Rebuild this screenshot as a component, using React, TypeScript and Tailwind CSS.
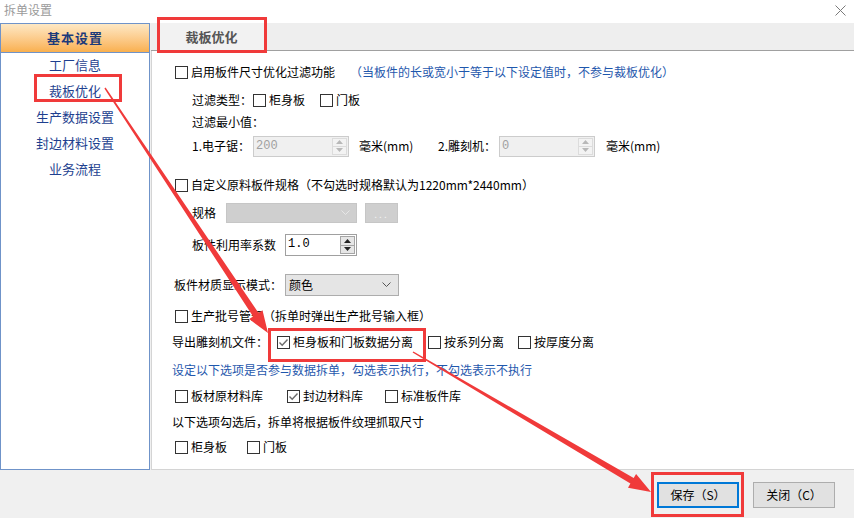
import React from "react";

const RED = "#f03a3a";

function Box({ checked = false }: { checked?: boolean }) {
  return (
    <span className="inline-flex w-[13px] h-[13px] shrink-0 items-center justify-center border border-[#333333] bg-white">
      {checked && (
        <svg width="11" height="11" viewBox="0 0 11 11">
          <path d="M1.5 5.5 L4.2 8.2 L9.5 2.5" fill="none" stroke="#6b6b6b" strokeWidth="1.4" />
        </svg>
      )}
    </span>
  );
}

function Check({ label, checked = false, w }: { label: string; checked?: boolean; w?: string }) {
  return (
    <div className={`flex items-center shrink-0 ${w ?? ""}`}>
      <Box checked={checked} />
      <span className="ml-[3px] whitespace-nowrap">{label}</span>
    </div>
  );
}

function Tri({ up, color }: { up: boolean; color: string }) {
  return (
    <svg width="7" height="4" viewBox="0 0 7 4">
      <path d={up ? "M0 4 L3.5 0 L7 4 Z" : "M0 0 L3.5 4 L7 0 Z"} fill={color} />
    </svg>
  );
}

function SpinInput({ value, disabled, w, h }: { value: string; disabled?: boolean; w: string; h: string }) {
  return (
    <div
      className={`flex ${w} ${h} border ${
        disabled ? "border-[#cccccc] bg-[#f0f0f0] text-[#a0a0a0]" : "border-[#a0a0a0] bg-white text-black"
      }`}
    >
      <span className="flex-1 pl-[2px] leading-[19px] font-['Liberation_Mono',monospace] text-[12px]">{value}</span>
      <div className="flex flex-col w-[15px] my-[1px] mr-[1px]">
        <div
          className={`flex-1 flex items-center justify-center border ${
            disabled ? "border-[#dcdcdc] bg-[#f3f3f3]" : "border-[#a5a5a5] bg-[#e6e6e6]"
          }`}
        >
          <Tri up color={disabled ? "#b8b8b8" : "#222222"} />
        </div>
        <div
          className={`flex-1 flex items-center justify-center border border-t-0 ${
            disabled ? "border-[#dcdcdc] bg-[#f3f3f3]" : "border-[#a5a5a5] bg-[#e6e6e6]"
          }`}
        >
          <Tri up={false} color={disabled ? "#b8b8b8" : "#222222"} />
        </div>
      </div>
    </div>
  );
}

function Chevron({ color }: { color: string }) {
  return (
    <svg width="9" height="6" viewBox="0 0 9 6">
      <path d="M0.5 0.5 L4.5 4.5 L8.5 0.5" fill="none" stroke={color} strokeWidth="1" />
    </svg>
  );
}

function arrow(x1: number, y1: number, x2: number, y2: number, w0: number, w1: number, hl: number, hw: number) {
  const dx = x2 - x1;
  const dy = y2 - y1;
  const L = Math.hypot(dx, dy);
  const ux = dx / L;
  const uy = dy / L;
  const px = -uy;
  const py = ux;
  const bx = x2 - ux * hl;
  const by = y2 - uy * hl;
  const pts = [
    [x1 + (px * w0) / 2, y1 + (py * w0) / 2],
    [bx + (px * w1) / 2, by + (py * w1) / 2],
    [bx + (px * hw) / 2, by + (py * hw) / 2],
    [x2, y2],
    [bx - (px * hw) / 2, by - (py * hw) / 2],
    [bx - (px * w1) / 2, by - (py * w1) / 2],
    [x1 - (px * w0) / 2, y1 - (py * w0) / 2],
  ];
  return pts.map((p) => p.map((n) => n.toFixed(1)).join(",")).join(" ");
}

const sideItems = ["工厂信息", "裁板优化", "生产数据设置", "封边材料设置", "业务流程"];

export default function App() {
  return (
    <div className="relative w-[854px] h-[518px] overflow-hidden bg-[#f0f0f0] text-[12px] text-black font-['Noto_Sans_CJK_SC',sans-serif]">
      {/* title bar */}
      <div className="h-[23px] bg-white flex items-center justify-between pl-[4px] pr-[8px]">
        <span className="text-[#9a9a9a] leading-none -mt-[3px]">拆单设置</span>
        <svg width="11" height="11" viewBox="0 0 11 11" className="-mt-[3px]">
          <path d="M0.5 0.5 L10.5 10.5 M10.5 0.5 L0.5 10.5" stroke="#7a7a7a" strokeWidth="1" />
        </svg>
      </div>

      {/* body */}
      <div className="flex h-[447px]">
        {/* sidebar */}
        <div className="w-[150px] h-full border border-[#6f93c9] bg-white flex flex-col">
          <div className="h-[29px] flex items-center justify-center border-b border-[#6f93c9] bg-gradient-to-b from-[#fde8c4] to-[#f9b04e]">
            <span className="font-bold text-[13px] text-[#1c3a7a] tracking-[1px]">基本设置</span>
          </div>
          <div className="flex flex-col items-center -mt-[1px]">
            {sideItems.map((s) => (
              <div key={s} className="h-[26px] leading-[26px] text-[13px] text-[#1e3f8f]">
                {s}
              </div>
            ))}
          </div>
        </div>

        {/* main panel */}
        <div className="ml-[1px] flex-1 flex flex-col">
          <div className="h-[28px] flex border-b border-[#a0a0a0] bg-[#eeeeee]">
            <div className="ml-[7px] w-[107px] h-[28px] border-x border-[#a0a0a0] bg-[#f2f2f2] flex items-center justify-center">
              <span className="font-bold text-[13px] text-[#555555]">裁板优化</span>
            </div>
          </div>
          <div className="flex-1 bg-white border-l border-b border-[#d4d4d4] pl-[23px] pt-[11px] flex flex-col">
            {/* row 1 */}
            <div className="h-[20px] flex items-center">
              <Check label="启用板件尺寸优化过滤功能" w="w-[175px]" />
              <span className="text-[#1f58ad] whitespace-nowrap">（当板件的长或宽小于等于以下设定值时，不参与裁板优化）</span>
            </div>
            {/* row 2 */}
            <div className="h-[20px] mt-[8px] flex items-center pl-[17px]">
              <span className="w-[61px]">过滤类型：</span>
              <Check label="柜身板" w="w-[67px]" />
              <Check label="门板" />
            </div>
            {/* row 3 */}
            <div className="h-[20px] mt-[2px] flex items-center pl-[17px]">过滤最小值：</div>
            {/* row 4 */}
            <div className="h-[22px] mt-[3px] flex items-center pl-[17px]">
              <span className="w-[61px]">1.电子锯：</span>
              <SpinInput value="200" disabled w="w-[96px]" h="h-[21px]" />
              <span className="ml-[10px] w-[79px]">毫米(mm)</span>
              <span className="w-[61px]">2.雕刻机：</span>
              <SpinInput value="0" disabled w="w-[96px]" h="h-[21px]" />
              <span className="ml-[11px]">毫米(mm)</span>
            </div>
            {/* row 5 */}
            <div className="h-[20px] mt-[18px] flex items-center">
              <Check label="自定义原料板件规格（不勾选时规格默认为1220mm*2440mm）" />
            </div>
            {/* row 6 */}
            <div className="h-[20px] mt-[8px] flex items-center pl-[17px]">
              <span className="w-[34px]">规格</span>
              <div className="w-[131px] h-[20px] bg-[#cfcfcf] border border-[#c6c6c6] flex items-center justify-end pr-[6px]">
                <Chevron color="#e6e6e6" />
              </div>
              <div className="ml-[8px] w-[33px] h-[20px] bg-[#cfcfcf] border border-[#c6c6c6] flex items-center justify-center text-[#f2f2f2] text-[10px] tracking-[2px]">
                ...
              </div>
            </div>
            {/* row 7 */}
            <div className="h-[22px] mt-[11px] flex items-center pl-[17px]">
              <span className="w-[93px]">板件利用率系数</span>
              <SpinInput value="1.0" w="w-[72px]" h="h-[22px]" />
            </div>
            {/* row 8 */}
            <div className="h-[22px] mt-[18px] flex items-center -ml-[1px]">
              <span className="w-[111px]">板件材质显示模式：</span>
              <div className="w-[114px] h-[22px] bg-[#e5e5e5] border border-[#adadad] flex items-center justify-between pl-[3px] pr-[7px]">
                <span>颜色</span>
                <Chevron color="#555555" />
              </div>
            </div>
            {/* row 9 */}
            <div className="h-[20px] mt-[10px] flex items-center">
              <Check label="生产批号管理（拆单时弹出生产批号输入框）" />
            </div>
            {/* row 10 */}
            <div className="h-[20px] mt-[6px] flex items-center -ml-[3px]">
              <span className="w-[105px]">导出雕刻机文件：</span>
              <Check label="柜身板和门板数据分离" checked w="w-[151px]" />
              <Check label="按系列分离" w="w-[90px]" />
              <Check label="按厚度分离" />
            </div>
            {/* row 11 */}
            <div className="h-[20px] mt-[8px] flex items-center -ml-[3px] text-[#1f58ad]">
              设定以下选项是否参与数据拆单，勾选表示执行，不勾选表示不执行
            </div>
            {/* row 12 */}
            <div className="h-[20px] mt-[6px] flex items-center">
              <Check label="板材原材料库" w="w-[112px]" />
              <Check label="封边材料库" checked w="w-[98px]" />
              <Check label="标准板件库" />
            </div>
            {/* row 13 */}
            <div className="h-[20px] mt-[6px] flex items-center -ml-[3px]">以下选项勾选后，拆单将根据板件纹理抓取尺寸</div>
            {/* row 14 */}
            <div className="h-[20px] mt-[5px] flex items-center">
              <Check label="柜身板" w="w-[72px]" />
              <Check label="门板" />
            </div>
          </div>
        </div>
      </div>

      {/* footer */}
      <div className="h-[48px] flex justify-end items-start pt-[12px] pr-[19px] gap-[14px]">
        <button className="w-[82px] h-[26px] bg-[#e1e1e1] border-2 border-[#0078d7] text-[12px]">保存（S）</button>
        <button className="w-[82px] h-[26px] bg-[#e1e1e1] border border-[#adadad] text-[12px]">关闭（C）</button>
      </div>

      {/* annotations */}
      <div className="absolute left-[34px] top-[74px] w-[88px] h-[28px] border-[3px] border-[#f03a3a]" />
      <div className="absolute left-[157px] top-[17px] w-[110px] h-[36px] border-[3px] border-[#f03a3a]" />
      <div className="absolute left-[268px] top-[328px] w-[158px] h-[34px] border-[3px] border-[#f03a3a]" />
      <div className="absolute left-[651px] top-[472px] w-[93px] h-[45px] border-[3px] border-[#f03a3a]" />
      <svg className="absolute inset-0 pointer-events-none" width="854" height="518">
        <polygon points={arrow(105, 88, 268, 333, 1.5, 6.5, 22, 16)} fill={RED} />
        <polygon points={arrow(413, 352, 651, 492, 1.5, 6.5, 22, 16)} fill={RED} />
      </svg>
    </div>
  );
}
